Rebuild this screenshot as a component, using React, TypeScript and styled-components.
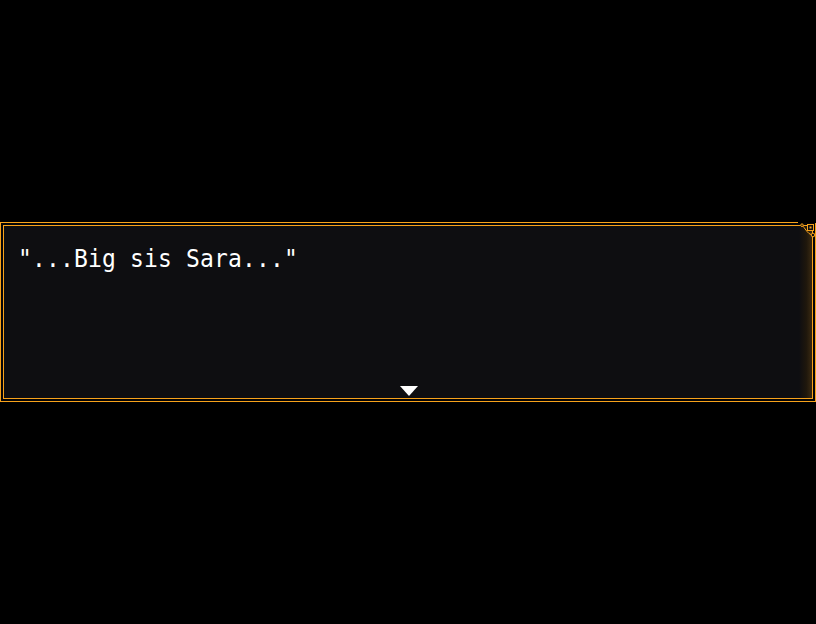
import React from "react";
import styled, { createGlobalStyle } from "styled-components";

const Global = createGlobalStyle`
  html, body { margin: 0; padding: 0; background: #000; }
  body { width: 816px; height: 624px; overflow: hidden; }
`;

const Stage = styled.div`
  width: 816px;
  height: 624px;
  background: #000;
  padding-top: 222px;
  box-sizing: border-box;
`;

const Window = styled.div`
  position: relative;
  width: 816px;
  height: 180px;
  box-sizing: border-box;
  border: 1px solid #f7a21b;
  background: #050506;
  padding: 2px;
`;

const Inner = styled.div`
  position: relative;
  height: 100%;
  box-sizing: border-box;
  border: 1px solid #f7a21b;
  background: linear-gradient(to right, #0e0e11 0%, #0e0e11 98.4%, #1f170c 99.3%, #3a2a12 100%);
  padding: 14px 0 0 14px;
`;

const Line = styled.div`
  font-family: "DejaVu Sans Mono", monospace;
  font-size: 23px;
  line-height: 36px;
  letter-spacing: 0.15px;
  color: #ffffff;
  transform: scaleY(1.1);
  transform-origin: left center;
`;

const Arrow = styled.svg`
  position: absolute;
  left: 395px;
  bottom: 1px;
`;

const Corner = styled.svg`
  position: absolute;
  right: -1px;
  top: -1px;
`;

export default function App() {
  return (
    <>
      <Global />
      <Stage>
        <Window>
          <Inner>
            <Line>"...Big sis Sara..."</Line>
            <Arrow width="20" height="12" viewBox="0 0 20 12">
              <polygon points="1,1 19,1 10,11" fill="#ffffff" />
            </Arrow>
          </Inner>
          <Corner width="18" height="18" viewBox="0 0 18 18">
            <rect x="0" y="0" width="18" height="1" fill="#000" />
            <path d="M0 3.5 H3 Q5 3.5 6 5.5 L9 9.5 Q11 12 13 12.5" stroke="#f7a21b" strokeWidth="1" fill="none" />
            <circle cx="4" cy="3.2" r="1.3" stroke="#f7a21b" strokeWidth="1" fill="#0e0e11" />
            <rect x="9.5" y="2.5" width="6" height="6" stroke="#f7a21b" strokeWidth="1" fill="#0e0e11" />
            <rect x="11.5" y="4.5" width="2" height="2" fill="#f7a21b" />
            <circle cx="15" cy="13" r="1.8" stroke="#f7a21b" strokeWidth="1" fill="#0e0e11" />
          </Corner>
        </Window>
      </Stage>
    </>
  );
}
